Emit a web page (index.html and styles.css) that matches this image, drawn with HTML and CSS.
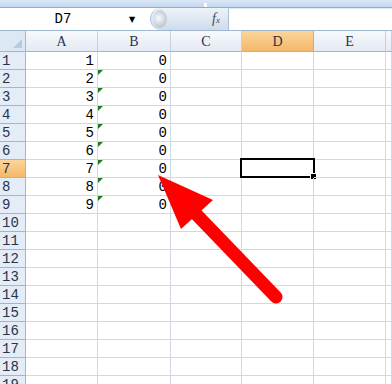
FILE: index.html
```html
<!DOCTYPE html>
<html lang="zh-cn">
<head>
    <meta charset="UTF-8">
    <meta name="viewport" content="width=device-width, initial-scale=1.0">
    <title>Sheet1</title>
    <link rel="stylesheet" href="styles.css">
</head>
<body>
    <div class="ribbon-edge"><span class="notch"></span></div>

    <div class="formula-bar">
        <div class="name-box">
            <span class="name-text">D7</span>
            <span class="drop">&#9660;</span>
        </div>
        <div class="pill">
            <span class="knob"></span>
            <span class="fx">f<sub>x</sub></span>
        </div>
        <div class="formula-input"></div>
    </div>

    <div class="sheet" id="sheet">
        <div class="corner"><span class="tri"></span></div>
        <div class="col-head">A</div>
        <div class="col-head">B</div>
        <div class="col-head">C</div>
        <div class="col-head active">D</div>
        <div class="col-head">E</div>
        <div class="col-head"></div>
    </div>

    <svg class="arrow" width="392" height="384" viewBox="0 0 392 384">
        <line x1="276" y1="297" x2="196" y2="214" stroke="#ff0000" stroke-width="13" stroke-linecap="round"/>
        <polygon points="158,175 213,200 181,229" fill="#ff0000"/>
    </svg>

    <script>
        const sheet = document.getElementById('sheet');
        const valuesA = [1, 2, 3, 4, 5, 6, 7, 8, 9];

        for (let r = 1; r <= 19; r++) {
            const head = document.createElement('div');
            head.className = 'row-head' + (r === 7 ? ' active' : '');
            head.textContent = r;
            sheet.appendChild(head);

            for (let c = 0; c < 6; c++) {
                const cell = document.createElement('div');
                cell.className = 'cell';
                if (r <= 9 && c === 0) {
                    cell.textContent = valuesA[r - 1];
                }
                if (r <= 9 && c === 1) {
                    cell.textContent = '0';
                    if (r >= 2) cell.classList.add('flag');
                }
                if (r === 7 && c === 3) {
                    const sel = document.createElement('span');
                    sel.className = 'selection';
                    cell.appendChild(sel);
                }
                sheet.appendChild(cell);
            }
        }
    </script>
</body>
</html>
```

FILE: styles.css
```css
body {
    margin: 0;
    width: 392px;
    height: 384px;
    overflow: hidden;
    position: relative;
    background: #ffffff;
    font-family: "Liberation Mono", monospace;
    font-size: 14px;
    color: #000;
}

.ribbon-edge {
    height: 7px;
    background: linear-gradient(#dbe7f6, #c3d7f0);
    border-bottom: 1px solid #8eaad2;
    position: relative;
}
.notch {
    position: absolute;
    left: 204px;
    top: 3px;
    width: 3px;
    height: 4px;
    background: #ffffff;
}

.formula-bar {
    display: flex;
    height: 22px;
    border-bottom: 1px solid #9eb6ce;
    background: #ffffff;
}
.name-box {
    width: 150px;
    display: flex;
    align-items: center;
}
.name-text {
    width: 126px;
    text-align: center;
}
.drop {
    font-size: 8px;
    width: 12px;
    text-align: center;
    font-family: "DejaVu Sans", sans-serif;
}
.pill {
    width: 77px;
    display: flex;
    align-items: center;
    justify-content: space-between;
    background: linear-gradient(#eef3fa, #cfdcec);
    border-radius: 11px 0 0 11px;
    border-left: 1px solid #b5c7de;
}
.knob {
    width: 14px;
    height: 18px;
    margin-left: 2px;
    border-radius: 50%;
    background: radial-gradient(circle at 40% 45%, #f8f9fb 0, #c8ced6 60%, #a9b3bf 100%);
}
.fx {
    font-family: "Liberation Serif", serif;
    font-style: italic;
    font-size: 14px;
    color: #4a4a4a;
    margin-right: 8px;
}
.fx sub {
    font-size: 9px;
    vertical-align: baseline;
}
.formula-input {
    flex: 1;
    border-left: 1px solid #a9bfd6;
    border-top: 1px solid #e3e9f1;
}

.sheet {
    display: grid;
    grid-template-columns: 26px 72px 73px 71px 72px 72px 6px;
    grid-template-rows: 21px repeat(19, 18px);
}
.sheet > div {
    box-sizing: border-box;
}

.corner {
    background: #dde8f5;
    border-right: 1px solid #9eb6ce;
    border-bottom: 1px solid #9eb6ce;
    position: relative;
}
.tri {
    position: absolute;
    right: 3px;
    bottom: 3px;
    width: 0;
    height: 0;
    border-left: 9px solid transparent;
    border-bottom: 9px solid #b8cbe3;
}

.col-head {
    background: linear-gradient(#f7f9fc, #e4eaf3);
    border-right: 1px solid #c5d1df;
    border-bottom: 1px solid #9eb6ce;
    text-align: center;
    line-height: 21px;
    font-family: "Liberation Serif", serif;
    color: #27354a;
}
.col-head.active {
    background: linear-gradient(#fbd59c, #f5b869);
    border-right-color: #f2a444;
}

.row-head {
    background: #e4ecf7;
    border-right: 1px solid #9eb6ce;
    border-bottom: 1px solid #9eb6ce;
    line-height: 18px;
    padding-left: 2px;
    color: #27354a;
}
.row-head.active {
    background: linear-gradient(#fbd59c, #f5b869);
}

.cell {
    border-right: 1px solid #d0d7e5;
    border-bottom: 1px solid #d0d7e5;
    line-height: 18px;
    text-align: right;
    padding-right: 3px;
    position: relative;
}
.cell.flag::before {
    content: "";
    position: absolute;
    left: 0;
    top: 0;
    border-top: 5px solid #1f7a1f;
    border-right: 5px solid transparent;
}
.selection {
    position: absolute;
    left: -2px;
    top: -2px;
    right: -2px;
    bottom: -1px;
    border: 2px solid #000;
}
.selection::after {
    content: "";
    position: absolute;
    right: -4px;
    bottom: -4px;
    width: 5px;
    height: 5px;
    background: #000;
    border: 1px solid #fff;
}

.arrow {
    position: absolute;
    left: 0;
    top: 0;
    pointer-events: none;
}
```
